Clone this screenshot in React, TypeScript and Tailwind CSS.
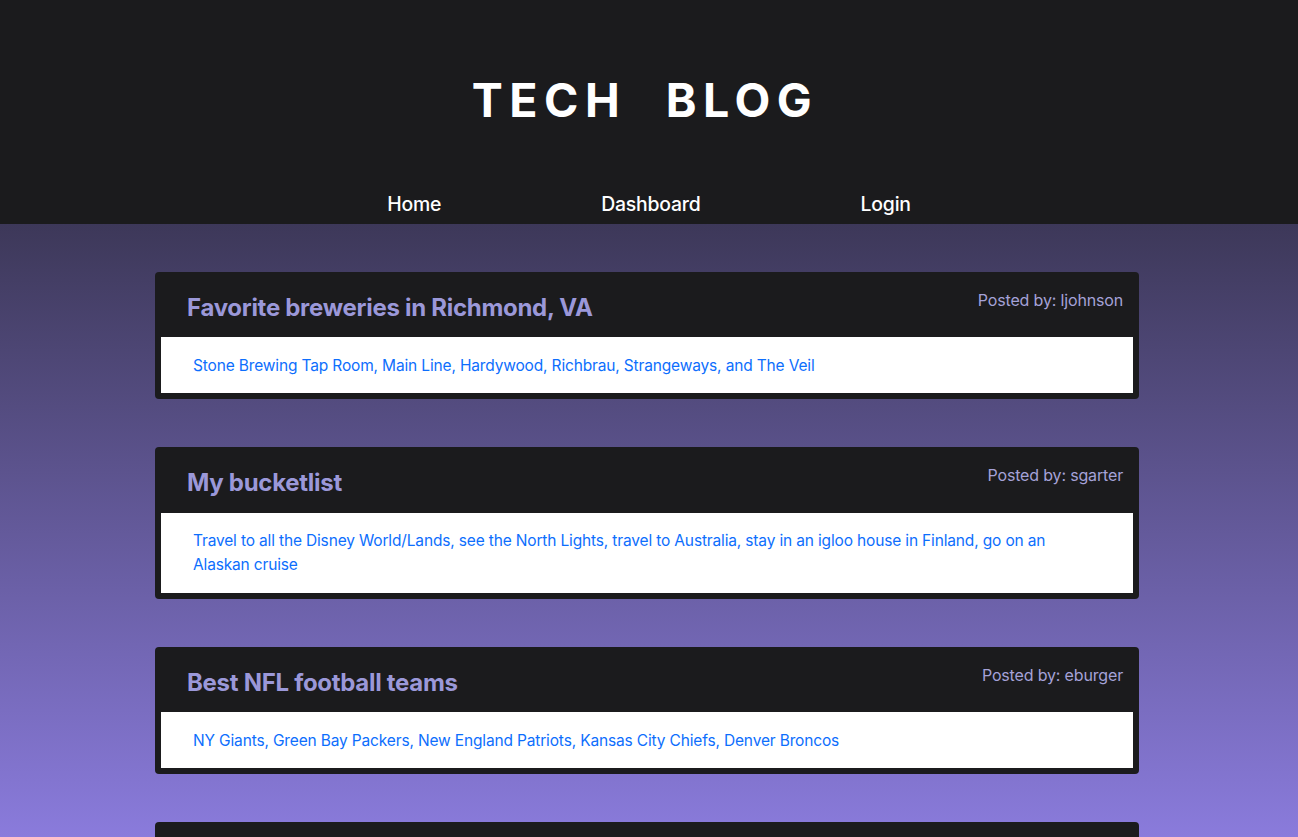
import React from "react";

const posts = [
  {
    title: "Favorite breweries in Richmond, VA",
    author: "ljohnson",
    body: "Stone Brewing Tap Room, Main Line, Hardywood, Richbrau, Strangeways, and The Veil",
  },
  {
    title: "My bucketlist",
    author: "sgarter",
    body: "Travel to all the Disney World/Lands, see the North Lights, travel to Australia, stay in an igloo house in Finland, go on an Alaskan cruise",
  },
  {
    title: "Best NFL football teams",
    author: "eburger",
    body: "NY Giants, Green Bay Packers, New England Patriots, Kansas City Chiefs, Denver Broncos",
  },
  {
    title: "Favorite programming languages",
    author: "ljohnson",
    body: "JavaScript, Python, Go, Rust",
  },
];

export default function App() {
  return (
    <div className="min-h-screen font-['Inter','Noto_Sans',sans-serif] bg-[#1b1b1d]">
      <header className="bg-[#1b1b1d] h-[224px] flex flex-col items-center">
        <h1 className="mt-[70px] mr-[8px] text-[46.5px] leading-[60px] font-bold text-white tracking-[0.14em] [word-spacing:22px]">
          TECH BLOG
        </h1>
        <nav className="mt-[60px] flex justify-center gap-[160px] text-[19.4px] leading-[28px] font-medium text-white tracking-[-0.01em]">
          <a href="#">Home</a>
          <a href="#">Dashboard</a>
          <a href="#">Login</a>
        </nav>
      </header>
      <main className="bg-[linear-gradient(to_bottom,#3d3859_0px,#8a7bdc_613px)] pt-[48px] pb-[48px] pr-[4px] flex flex-col items-center gap-[48px]">
        {posts.map((p) => (
          <article key={p.title} className="w-[984px] rounded-[4px] bg-[#1b1b1d] px-[6px] pb-[6px]">
            <div className="h-[65.4px] flex justify-between pl-[26px] pr-[10px]">
              <h2 className="mt-[21px] text-[24px] leading-[30px] font-bold text-[#9b98d9] tracking-[-0.012em]">{p.title}</h2>
              <span className="mt-[17px] text-[16px] leading-[22px] text-[#a5a2d8] tracking-[-0.01em]">Posted by: {p.author}</span>
            </div>
            <div className="bg-white px-[32px] pt-[16.5px] pb-[15.5px] text-[15.5px] leading-[24px] text-[#0d6efd] tracking-[-0.01em]">
              {p.body}
            </div>
          </article>
        ))}
      </main>
    </div>
  );
}
